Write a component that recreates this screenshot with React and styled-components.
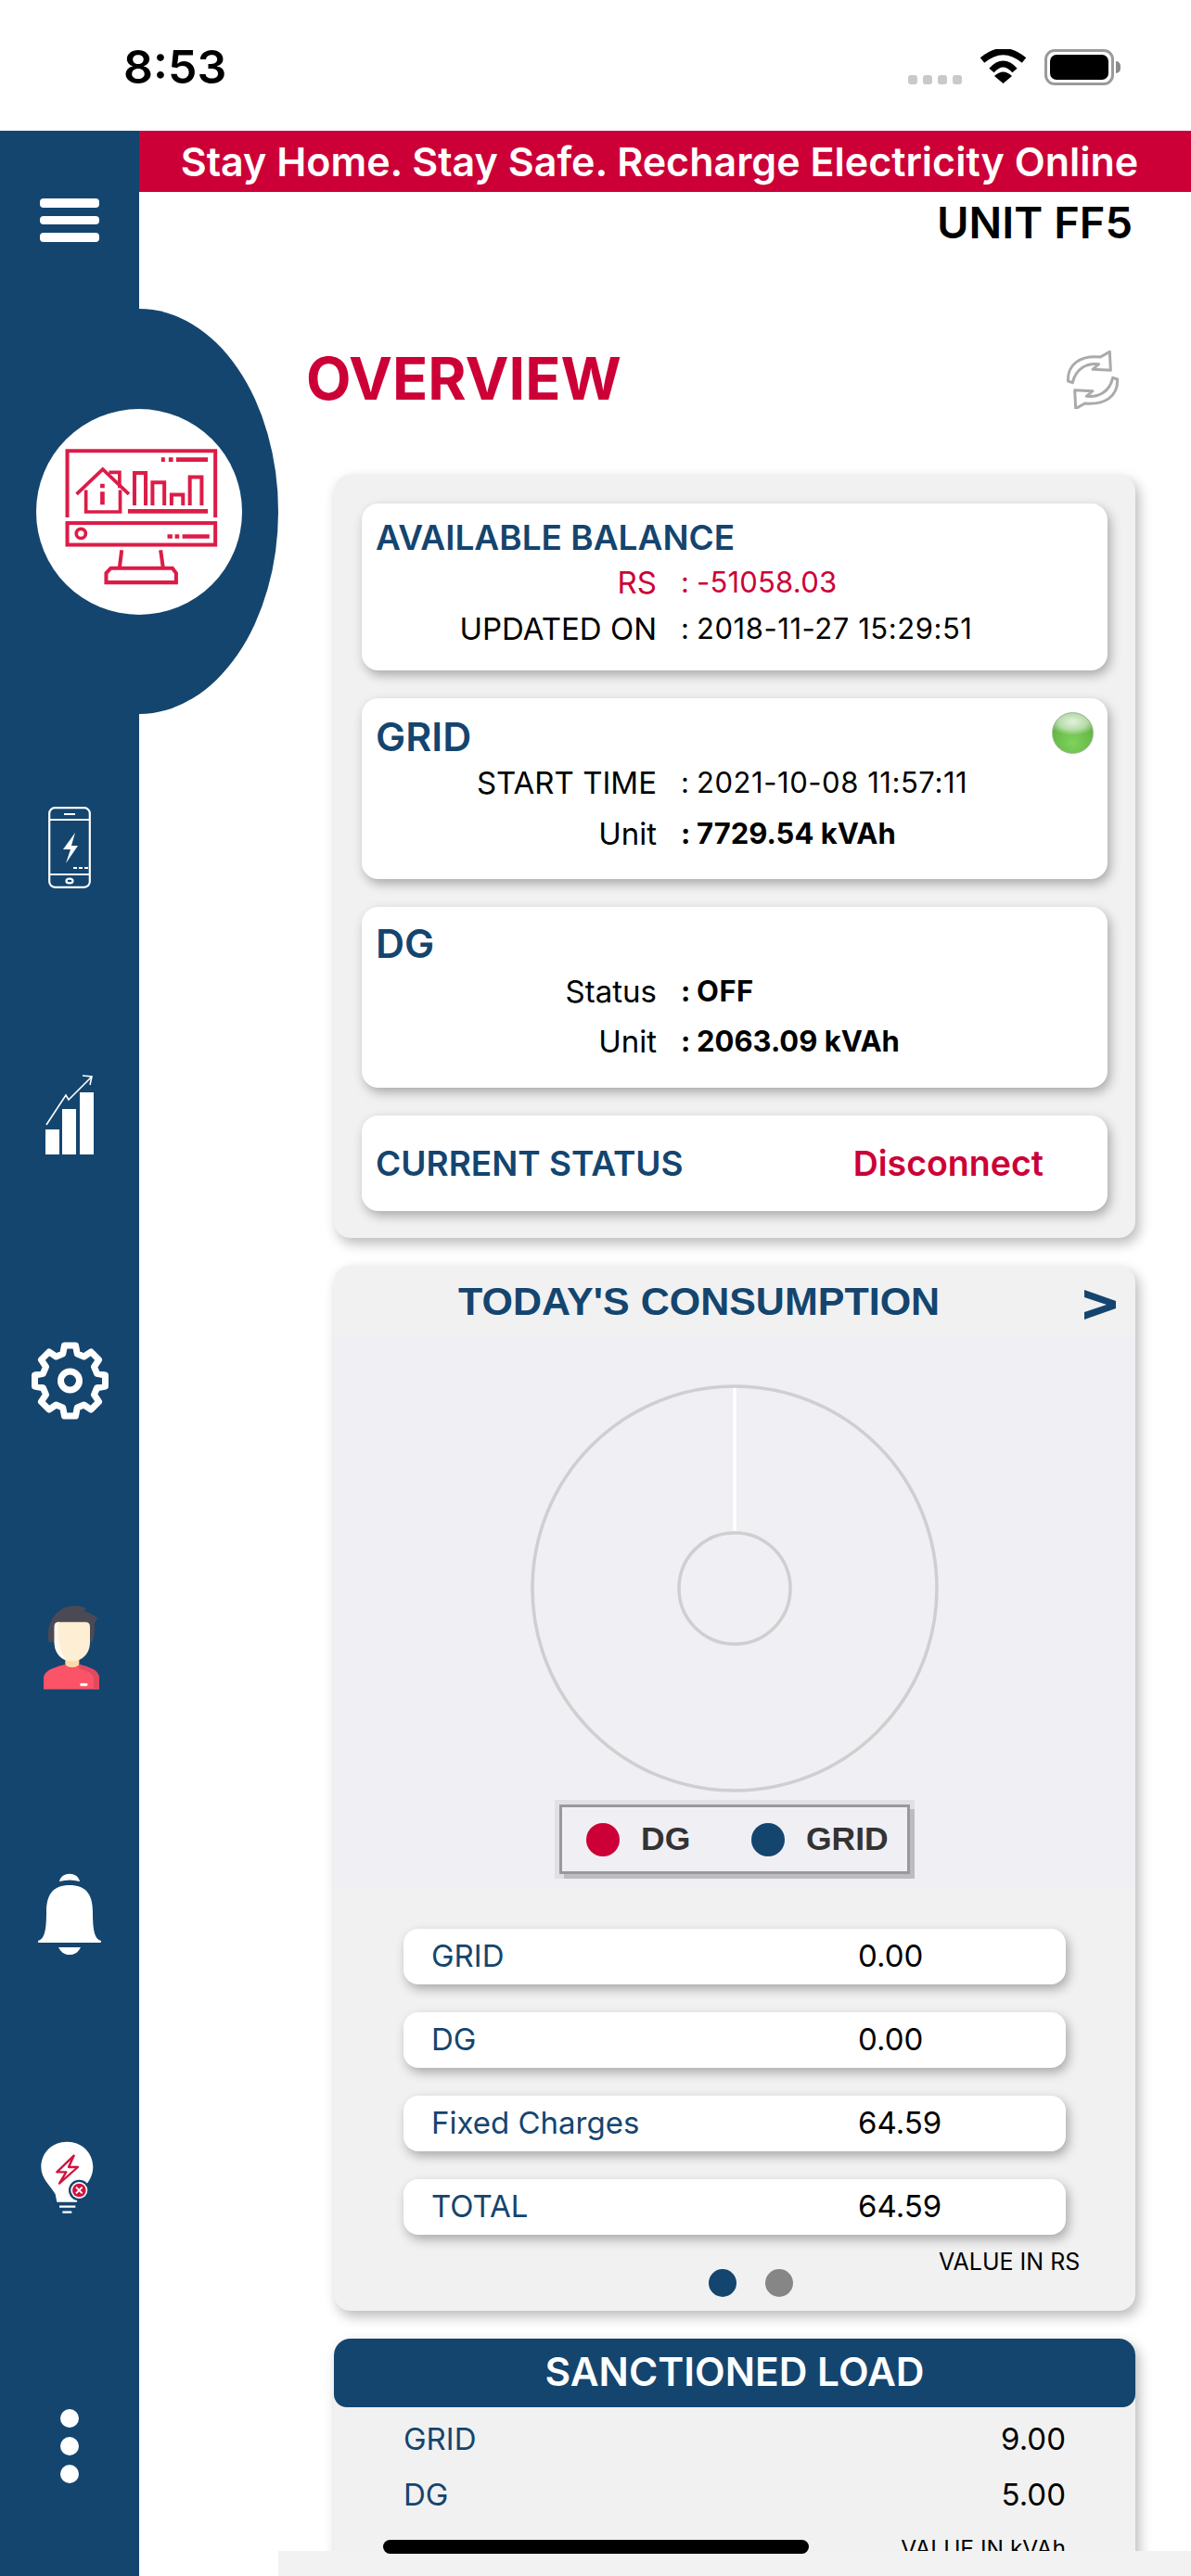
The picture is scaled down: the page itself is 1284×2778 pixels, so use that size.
import React from "react";
import styled, { createGlobalStyle } from "styled-components";

const BLUE = "#14456f";
const RED = "#cc0037";

const GlobalStyle = createGlobalStyle`
  * { box-sizing: border-box; }
  html, body { margin: 0; padding: 0; background: #fff; }
  body { font-family: Inter, "Noto Sans", sans-serif; }
`;

const Page = styled.div`
  position: relative;
  width: 1284px;
  height: 2778px;
  overflow: hidden;
  background: #fff;
  display: flex;
  flex-direction: column;
`;

/* status bar */
const StatusBar = styled.div`
  height: 141px;
  flex: none;
  display: flex;
  align-items: flex-start;
  padding: 42px 83px 0 133px;
`;
const Clock = styled.div`
  font-size: 50px;
  line-height: 60px;
  font-weight: 600;
  color: #000;
  flex: 1;
`;
const StatusIcons = styled.div`
  display: flex;
  align-items: flex-start;
  padding-top: 11px;
`;
const SignalDots = styled.div`
  display: flex;
  gap: 6px;
  margin-top: 28px;
  margin-right: 19px;
`;
const SignalDot = styled.span`
  width: 10px;
  height: 10px;
  border-radius: 3px;
  background: #c9c9c9;
`;
const Battery = styled.div`
  position: relative;
  width: 75px;
  height: 39px;
  margin-left: 19px;
  border: 3px solid #9a9a9a;
  border-radius: 11px;
  padding: 3px;
  &::before {
    content: "";
    display: block;
    width: 100%;
    height: 100%;
    background: #000;
    border-radius: 7px;
  }
  &::after {
    content: "";
    position: absolute;
    right: -10px;
    top: 10px;
    width: 5px;
    height: 13px;
    background: #8a8a8a;
    border-radius: 0 6px 6px 0;
  }
`;

const Body = styled.div`
  flex: 1;
  display: flex;
  min-height: 0;
`;

/* sidebar */
const Sidebar = styled.aside`
  position: relative;
  z-index: 1;
  width: 150px;
  flex: none;
  background: ${BLUE};
  display: flex;
  flex-direction: column;
  align-items: center;
`;
const MenuButton = styled.div`
  margin-top: 73px;
  display: flex;
  flex-direction: column;
  gap: 9px;
`;
const MenuBar = styled.span`
  display: block;
  width: 64px;
  height: 9.5px;
  border-radius: 4px;
  background: #fff;
`;
const Hero = styled.div`
  position: absolute;
  left: 0;
  top: 192px;
  width: 300px;
  height: 437px;
  border-radius: 50%;
  background: ${BLUE};
  display: flex;
  align-items: center;
  justify-content: center;
`;
const HeroCircle = styled.div`
  width: 222px;
  height: 222px;
  border-radius: 50%;
  background: #fff;
  display: flex;
`;
const NavList = styled.nav`
  margin-top: 510px;
  width: 100%;
  display: grid;
  grid-auto-rows: 287.5px;
  justify-items: center;
  align-items: center;
`;
const MoreDots = styled.div`
  display: flex;
  flex-direction: column;
  gap: 10px;
  margin-top: -2px;
`;
const MoreDot = styled.span`
  width: 20px;
  height: 20px;
  border-radius: 50%;
  background: #fff;
`;

/* main column */
const Main = styled.main`
  flex: 1;
  min-width: 0;
  display: flex;
  flex-direction: column;
`;
const Banner = styled.div`
  height: 66px;
  flex: none;
  background: ${RED};
  color: #fff;
  font-size: 43px;
  font-weight: 600;
  line-height: 66px;
  text-align: center;
  white-space: nowrap;
  padding-right: 12px;
`;
const UnitLabel = styled.div`
  height: 56px;
  flex: none;
  padding: 10px 63px 0 0;
  text-align: right;
  font-size: 47px;
  line-height: 46px;
  font-weight: 600;
  color: #000;
`;
const OverviewRow = styled.div`
  height: 249px;
  flex: none;
  padding: 41px 76px 0 180px;
  display: flex;
  align-items: center;
  justify-content: space-between;
`;
const OverviewTitle = styled.h1`
  margin: 0;
  font-size: 63px;
  line-height: 70px;
  font-weight: 700;
  color: ${RED};
`;
const Column = styled.div`
  margin-left: 210px;
  width: 864px;
  display: flex;
  flex-direction: column;
  gap: 30px;
`;
const Panel = styled.section`
  border-radius: 18px;
  background: #f1f1f1;
  box-shadow: 4px 6px 14px rgba(0, 0, 0, 0.28);
`;
const StatusPanel = styled(Panel)`
  padding: 31px 30px 29px;
  display: flex;
  flex-direction: column;
  gap: 30px;
`;
const Card = styled.div`
  position: relative;
  height: ${(p) => p.$height}px;
  padding: ${(p) => p.$pad || 16}px 15px 0;
  background: #fff;
  border-radius: 18px;
  box-shadow: 3px 5px 12px rgba(0, 0, 0, 0.3);
`;
const CardTitle = styled.div`
  font-size: ${(p) => p.$size}px;
  line-height: ${(p) => p.$line}px;
  font-weight: 600;
  color: ${BLUE};
`;
const InfoRows = styled.div`
  display: flex;
  flex-direction: column;
  margin-top: ${(p) => p.$top || 0}px;
  gap: ${(p) => p.$gap || 0}px;
`;
const InfoRow = styled.div`
  display: grid;
  grid-template-columns: 303px 1fr;
  height: 50px;
  align-items: center;
  color: ${(p) => p.$color || "#000"};
`;
const InfoLabel = styled.div`
  font-size: 33px;
  font-weight: 400;
  text-align: right;
  white-space: nowrap;
`;
const InfoValue = styled.div`
  display: flex;
  padding-left: 26px;
  font-size: 31px;
  font-weight: ${(p) => (p.$bold ? 700 : 400)};
  letter-spacing: ${(p) => p.$spacing || 0}px;
  white-space: nowrap;
  position: relative;
  top: -1px;
`;
const Colon = styled.span`
  width: 17px;
  flex: none;
`;
const Led = styled.span`
  position: absolute;
  top: 15px;
  right: 15px;
  width: 45px;
  height: 45px;
  border-radius: 50%;
  border: 1px solid #9fb59f;
  background: radial-gradient(ellipse 60% 34% at 50% 22%, #e4f2dc 0%, #b5dca8 60%, transparent 100%),
    radial-gradient(circle at 50% 75%, #7fd35d 0%, #5fb33e 70%, #4a9530 100%);
`;
const StatusCard = styled(Card)`
  display: flex;
  align-items: center;
  padding: 0 15px;
  justify-content: space-between;
`;
const StatusLabel = styled.div`
  font-size: 37px;
  font-weight: 600;
  color: ${BLUE};
`;
const StatusAction = styled.div`
  font-size: 37.5px;
  font-weight: 600;
  color: ${RED};
  margin-right: 54px;
`;

/* consumption */
const ChartHeader = styled.div`
  height: 77px;
  display: flex;
  align-items: center;
  padding: 0 21px 0 134px;
  justify-content: space-between;
`;
const ChartTitle = styled.div`
  font-family: "Liberation Sans", Arial, sans-serif;
  font-size: 43px;
  font-weight: 700;
  color: ${BLUE};
  white-space: nowrap;
`;
const ChartArea = styled.div`
  background: #efeff4;
  padding: 51px 0 17px;
  display: flex;
  flex-direction: column;
  align-items: center;
`;
const Legend = styled.div`
  margin-top: 13px;
  width: 378px;
  height: 75px;
  border: 3px solid #999;
  background: #efeff4;
  box-shadow: 5px 5px 0 #bcbcc2, 0 0 0 5px #e0e0e6;
  display: flex;
  align-items: center;
  padding-left: 26px;
`;
const LegendDot = styled.span`
  width: 36px;
  height: 36px;
  border-radius: 50%;
  background: ${(p) => p.$color};
  flex: none;
  margin-right: 23px;
`;
const LegendText = styled.span`
  font-family: "Liberation Sans", Arial, sans-serif;
  font-size: 35.5px;
  font-weight: 700;
  color: #333;
  width: ${(p) => p.$width}px;
`;
const ValueList = styled.div`
  margin: 42px 0 0 75px;
  width: 714px;
  display: flex;
  flex-direction: column;
  gap: 30px;
`;
const ValueRow = styled.div`
  height: 60px;
  background: #fff;
  border-radius: 16px;
  box-shadow: 3px 5px 12px rgba(0, 0, 0, 0.3);
  display: grid;
  grid-template-columns: 460px 1fr;
  align-items: center;
  padding: 0 0 2px 30px;
  font-size: 33px;
`;
const ValueLabel = styled.span`
  color: ${BLUE};
`;
const ValueNumber = styled.span`
  color: #000;
`;
const PanelFooter = styled.div`
  height: 82px;
  display: flex;
  align-items: flex-start;
  padding-left: 404px;
`;
const Pager = styled.div`
  display: flex;
  gap: 31px;
  margin-top: 37px;
  width: 248px;
`;
const PagerDot = styled.span`
  width: 30px;
  height: 30px;
  border-radius: 50%;
  background: ${(p) => p.$color};
`;
const UnitNote = styled.div`
  font-size: ${(p) => p.$size || 25}px;
  line-height: 30px;
  color: #000;
  white-space: nowrap;
  margin-top: ${(p) => p.$top}px;
  text-align: right;
`;

/* sanctioned load */
const LoadHeader = styled.div`
  height: 74px;
  background: ${BLUE};
  border-radius: 18px 18px 14px 14px;
  color: #fff;
  font-size: 42.5px;
  font-weight: 600;
  line-height: 72px;
  text-align: center;
`;
const LoadBody = styled.div`
  padding: 4px 75px 40px 75px;
  display: flex;
  flex-direction: column;
`;
const LoadRow = styled.div`
  height: 60px;
  display: flex;
  align-items: center;
  justify-content: space-between;
  font-size: 33px;
`;

/* overlays at the bottom of the page */
const BottomStrip = styled.div`
  position: absolute;
  left: 300px;
  right: 0;
  bottom: 0;
  height: 27px;
  background: #f2f2f2;
  z-index: 2;
`;
const HomeIndicator = styled.div`
  position: absolute;
  left: 413px;
  top: 2739px;
  width: 459px;
  height: 15px;
  border-radius: 8px;
  background: #000;
  z-index: 3;
`;

/* drawings */
const Wifi = () => (
  <svg width="51" height="37" viewBox="0 0 51 37" style={{ display: "block" }}>
    <path d="M3 12 Q25.5 -7 48 12" fill="none" stroke="#000" strokeWidth="7" />
    <path d="M13 23 Q25.5 9 38 23" fill="none" stroke="#000" strokeWidth="7" />
    <path d="M16 29 Q25.5 20 35 29 L25.5 37 Z" fill="#000" />
  </svg>
);

const RefreshIcon = () => {
  const arrow =
    "M70 150 C68 95 110 66 175 72 L205 55 L208 115 L150 112 L170 95 C130 90 95 110 85 155 Z";
  return (
    <svg width="60" height="65" viewBox="60 45 180 195" style={{ filter: "blur(0.5px)" }}>
      <g fill="#fff" stroke="#aaaaaa" strokeWidth="9" strokeLinejoin="round">
        <path d={arrow} />
        <path d={arrow} transform="rotate(180 150 147)" />
      </g>
    </svg>
  );
};

const MonitorIcon = () => (
  <svg width="222" height="222" viewBox="28 64 662 662" fill="none" stroke="#dc1c48" strokeWidth="12">
    <path d="M128 413 V199 H604 V413" />
    <path d="M430 227 h12 M454 227 h14 M478 227 H580" strokeWidth="14" />
    <path d="M158 338 L242 258 L326 338" strokeWidth="11" />
    <path d="M188 325 V395 H298 V325" strokeWidth="11" />
    <path d="M262 268 H296 V318" strokeWidth="11" />
    <path d="M241 305 v13 M241 330 v42" strokeWidth="14" />
    <path d="M344 374 V270 H380 V374 M402 374 V300 H440 V374 M463 374 V340 H500 V374 M522 374 V283 H560 V374" />
    <path d="M323 393 H580" strokeWidth="14" />
    <rect x="128" y="431" width="476" height="70" />
    <circle cx="172" cy="465" r="15" strokeWidth="11" />
    <path d="M450 474 h16 M474 474 h14 M498 474 H585" strokeWidth="13" />
    <path d="M303 518 L296 575 M428 518 L436 575" />
    <path d="M253 622 V592 L268 576 H466 L478 592 V622 Z" />
  </svg>
);

const PhoneIcon = () => (
  <svg width="46" height="88" viewBox="0 0 46 88" fill="none" stroke="#fff" strokeWidth="2.2">
    <rect x="1.2" y="1.2" width="43.6" height="85.6" rx="6" />
    <path d="M1 14 H45 M1 73 H45 M17 8 H29" />
    <ellipse cx="23" cy="80" rx="3.5" ry="2.4" />
    <path d="M29 28 L16 46 H24 L19 61 L32 42 H25 Z" fill="#fff" stroke="none" />
    <path d="M27 66 h4 M33 66 h4 M39 66 h4" />
  </svg>
);

const GrowthIcon = () => (
  <svg width="52" height="86" viewBox="0 0 52 86" fill="none">
    <rect x="0" y="59" width="15" height="27" fill="#fff" />
    <rect x="18" y="37" width="15" height="49" fill="#fff" />
    <rect x="37" y="19" width="15" height="67" fill="#fff" />
    <path d="M1 54 L22 22 L25 27 L50 2 M40 1 L50 2 L48 11" stroke="#fff" strokeWidth="1.6" />
  </svg>
);

const gearPath = () => {
  const pts = [];
  const ring = [
    [38.5, -9],
    [38.5, 9],
    [30, 15],
    [30, 30],
  ];
  for (let i = 0; i < 8; i++) {
    ring.forEach(([r, a]) => {
      const t = ((i * 45 - 90 + a) * Math.PI) / 180;
      pts.push(`${(42.5 + r * Math.cos(t)).toFixed(1)} ${(42 + r * Math.sin(t)).toFixed(1)}`);
    });
  }
  return `M${pts.join(" L")} Z`;
};

const GearIcon = () => (
  <svg width="85" height="84" viewBox="0 0 85 84" fill="none" stroke="#fff" strokeWidth="7" strokeLinejoin="round">
    <path d={gearPath()} />
    <circle cx="42.5" cy="42" r="10" />
  </svg>
);

const AvatarIcon = () => (
  <svg width="66" height="90" viewBox="45 33 198 270">
    <path
      d="M76 150 C66 70 118 28 165 33 C180 33 192 36 197 41 L190 50 C212 54 226 64 234 72 L224 90 C228 110 222 135 217 150 Z"
      fill="#4b4a54"
    />
    <path d="M130 200 H175 V225 Q152 240 130 225 Z" fill="#fdd9a6" />
    <path
      d="M60 302 V270 C60 245 80 235 130 222 C140 235 165 235 175 222 C225 235 240 245 240 270 V302 Z"
      fill="#fb5368"
    />
    <path d="M222 302 V268 C222 250 200 242 175 236 L175 222 C225 235 240 245 240 270 V302 Z" fill="#e04a60" />
    <path
      d="M95 98 Q95 85 110 85 H195 Q210 85 210 100 V150 C210 190 180 212 152 212 C125 212 95 190 95 150 Z"
      fill="#feeed4"
    />
    <path d="M95 98 Q95 85 110 85 C105 110 105 160 132 208 C110 200 95 180 95 150 Z" fill="#fff8ec" />
    <rect x="178" y="283" width="24" height="9" rx="3" fill="#fff" />
  </svg>
);

const BellIcon = () => (
  <svg width="70" height="88" viewBox="0 0 70 88" fill="#fff">
    <path d="M24 9 C26 -2 44 -2 46 9 Q35 6 24 9 Z" />
    <path d="M1 73 C8 71 10 62 10 42 C10 22 18 13 35 13 C52 13 60 22 60 42 C60 62 62 71 69 73 Q69.5 75 68 75 H2 Q.5 75 1 73 Z" />
    <path d="M23 80 H47 C42 91 28 91 23 80 Z" />
  </svg>
);

const BulbIcon = () => (
  <svg width="62" height="88" viewBox="52 25 186 264" style={{ marginRight: 4 }}>
    <path
      d="M143 30 C95 30 59 65 59 112 C59 150 88 170 105 200 L110 225 H175 L178 200 C200 175 227 150 227 112 C227 65 190 30 143 30 Z"
      fill="#fff"
    />
    <path d="M118 240 H170 M128 258 H158" stroke="#fff" strokeWidth="7" />
    <path d="M165 75 L110 128 H140 L118 165 L178 112 H148 Z" fill="none" stroke="#d0143f" strokeWidth="7" strokeLinejoin="round" />
    <circle cx="182" cy="187" r="34" fill={BLUE} />
    <circle cx="182" cy="187" r="27" fill="#fff" />
    <circle cx="182" cy="187" r="22" fill="#d0143f" />
    <path d="M172 177 L192 197 M192 177 L172 197" stroke="#fff" strokeWidth="6" />
  </svg>
);

const DonutChart = () => (
  <svg width="440" height="440" viewBox="0 0 440 440" fill="none" style={{ display: "block" }}>
    <circle cx="220" cy="220" r="218" stroke="#cfcfcf" strokeWidth="3.5" />
    <circle cx="220" cy="220" r="60" stroke="#cfcfcf" strokeWidth="3.5" />
    <path d="M220 4 V158" stroke="#ffffff" strokeWidth="3.5" />
  </svg>
);

const ChevronMark = () => (
  <svg width="34" height="32" viewBox="0 0 34 32" fill={BLUE} style={{ marginTop: 6 }}>
    <path d="M0 0 L34 12 V20 L0 32 V24 L24 16 L0 8 Z" />
  </svg>
);

const consumption = [
  { label: "GRID", value: "0.00" },
  { label: "DG", value: "0.00" },
  { label: "Fixed Charges", value: "64.59" },
  { label: "TOTAL", value: "64.59" },
];

const App = () => {
  return (
    <Page>
      <GlobalStyle />
      <StatusBar>
        <Clock>8:53</Clock>
        <StatusIcons>
          <SignalDots>
            <SignalDot />
            <SignalDot />
            <SignalDot />
            <SignalDot />
          </SignalDots>
          <Wifi />
          <Battery />
        </StatusIcons>
      </StatusBar>

      <Body>
        <Sidebar>
          <MenuButton>
            <MenuBar />
            <MenuBar />
            <MenuBar />
          </MenuButton>
          <Hero>
            <HeroCircle>
              <MonitorIcon />
            </HeroCircle>
          </Hero>
          <NavList>
            <PhoneIcon />
            <GrowthIcon />
            <GearIcon />
            <AvatarIcon />
            <BellIcon />
            <BulbIcon />
            <MoreDots>
              <MoreDot />
              <MoreDot />
              <MoreDot />
            </MoreDots>
          </NavList>
        </Sidebar>

        <Main>
          <Banner>Stay Home. Stay Safe. Recharge Electricity Online</Banner>
          <UnitLabel>UNIT FF5</UnitLabel>
          <OverviewRow>
            <OverviewTitle>OVERVIEW</OverviewTitle>
            <RefreshIcon />
          </OverviewRow>

          <Column>
            <StatusPanel>
              <Card $height={180}>
                <CardTitle $size={37} $line={42}>AVAILABLE BALANCE</CardTitle>
                <InfoRows $top={2}>
                  <InfoRow $color={RED}>
                    <InfoLabel>RS</InfoLabel>
                    <InfoValue $spacing={0.2}><Colon>:</Colon>-51058.03</InfoValue>
                  </InfoRow>
                  <InfoRow>
                    <InfoLabel>UPDATED ON</InfoLabel>
                    <InfoValue $spacing={0.55}><Colon>:</Colon>2018-11-27 15:29:51</InfoValue>
                  </InfoRow>
                </InfoRows>
              </Card>
              <Card $height={195} $pad={18}>
                <CardTitle $size={43} $line={46}>GRID</CardTitle>
                <Led />
                <InfoRows $top={2} $gap={5}>
                  <InfoRow>
                    <InfoLabel>START TIME</InfoLabel>
                    <InfoValue $spacing={0.55}><Colon>:</Colon>2021-10-08 11:57:11</InfoValue>
                  </InfoRow>
                  <InfoRow>
                    <InfoLabel>Unit</InfoLabel>
                    <InfoValue $bold><Colon>:</Colon>7729.54 kVAh</InfoValue>
                  </InfoRow>
                </InfoRows>
              </Card>
              <Card $height={195}>
                <CardTitle $size={43} $line={46}>DG</CardTitle>
                <InfoRows $top={4} $gap={4}>
                  <InfoRow>
                    <InfoLabel>Status</InfoLabel>
                    <InfoValue $bold $spacing={0.5}><Colon>:</Colon>OFF</InfoValue>
                  </InfoRow>
                  <InfoRow>
                    <InfoLabel>Unit</InfoLabel>
                    <InfoValue $bold><Colon>:</Colon>2063.09 kVAh</InfoValue>
                  </InfoRow>
                </InfoRows>
              </Card>
              <StatusCard $height={103}>
                <StatusLabel>CURRENT STATUS</StatusLabel>
                <StatusAction>Disconnect</StatusAction>
              </StatusCard>
            </StatusPanel>

            <Panel>
              <ChartHeader>
                <ChartTitle>TODAY'S CONSUMPTION</ChartTitle>
                <ChevronMark />
              </ChartHeader>
              <ChartArea>
                <DonutChart />
                <Legend>
                  <LegendDot $color={RED} />
                  <LegendText $width={119}>DG</LegendText>
                  <LegendDot $color={BLUE} />
                  <LegendText $width={100}>GRID</LegendText>
                </Legend>
              </ChartArea>
              <ValueList>
                {consumption.map((row) => (
                  <ValueRow key={row.label}>
                    <ValueLabel>{row.label}</ValueLabel>
                    <ValueNumber>{row.value}</ValueNumber>
                  </ValueRow>
                ))}
              </ValueList>
              <PanelFooter>
                <Pager>
                  <PagerDot $color={BLUE} />
                  <PagerDot $color="#868686" />
                </Pager>
                <UnitNote $top={14}>VALUE IN RS</UnitNote>
              </PanelFooter>
            </Panel>

            <Panel>
              <LoadHeader>SANCTIONED LOAD</LoadHeader>
              <LoadBody>
                <LoadRow>
                  <ValueLabel>GRID</ValueLabel>
                  <ValueNumber>9.00</ValueNumber>
                </LoadRow>
                <LoadRow>
                  <ValueLabel>DG</ValueLabel>
                  <ValueNumber>5.00</ValueNumber>
                </LoadRow>
                <UnitNote $top={13} $size={24.5}>VALUE IN kVAh</UnitNote>
              </LoadBody>
            </Panel>
          </Column>
        </Main>
      </Body>

      <BottomStrip />
      <HomeIndicator />
    </Page>
  );
};

export default App;
